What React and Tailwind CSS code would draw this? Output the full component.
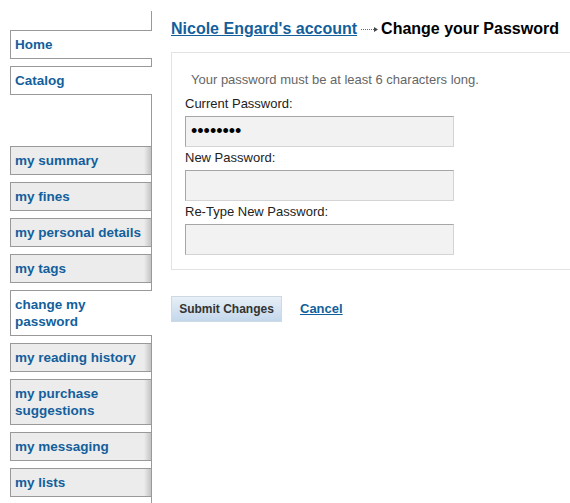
const tabs = [
  { label: 'my summary' },
  { label: 'my fines' },
  { label: 'my personal details' },
  { label: 'my tags' },
  { label: 'change my password', active: true },
  { label: 'my reading history' },
  { label: 'my purchase suggestions' },
  { label: 'my messaging' },
  { label: 'my lists' },
];

function Tab({ label, active, className = '' }) {
  const base = 'py-[5px] pl-[4px] pr-[6px] leading-[17px] text-[13.5px] font-bold text-[#135f9c] border border-[#999]';
  if (active) {
    return <li className={`${base} -mr-px border-r-0 bg-white ${className}`}><a href="#">{label}</a></li>;
  }
  return (
    <li className={`${base} border-r-0 bg-[linear-gradient(90deg,#ececec_95%,#c4c4c4)] ${className}`}>
      <a href="#">{label}</a>
    </li>
  );
}

function Arrow() {
  return (
    <svg width="18" height="7" viewBox="0 0 18 7" className="inline-block ml-[4px] mr-[2px] align-middle">
      <line x1="0" y1="3.5" x2="13" y2="3.5" stroke="#666" strokeWidth="1" strokeDasharray="1 1" />
      <polygon points="13,1 17,3.5 13,6" fill="#444" />
    </svg>
  );
}

function Field({ label, value, last }) {
  return (
    <div>
      <label className="block text-[13px] leading-4 text-[#222] mb-[4px]">{label}</label>
      <input
        type="password"
        value={value}
        readOnly
        className={`block w-[269px] h-[31px] bg-[#f2f2f2] border border-[#d4d4d4] border-t-[#a6a6a6] border-l-[#a6a6a6] pl-[5px] text-[18px] text-black outline-none ${last ? '' : 'mb-[3px]'}`}
      />
    </div>
  );
}

export default function App() {
  return (
    <div className="w-[570px] h-[503px] overflow-hidden flex bg-white" style={{ fontFamily: '"Liberation Sans", Arial, sans-serif' }}>
      <ul className="w-[152px] shrink-0 pl-[10px] mt-[11px] pt-[19px] border-r border-[#999] flex flex-col">
        <Tab label="Home" active />
        <Tab label="Catalog" active className="mt-[7px]" />
        {tabs.map((t, i) => (
          <Tab key={t.label} label={t.label} active={t.active} className={i === 0 ? 'mt-[51px]' : 'mt-[7px]'} />
        ))}
      </ul>

      <div className="flex-1 pl-[19px] pt-[19px]">
        <h1 className="text-[16px] leading-[20px] font-bold text-black whitespace-nowrap">
          <a href="#" className="text-[#135f9c] underline">Nicole Engard's account</a>
          <Arrow />
          Change your Password
        </h1>

        <div className="mt-[13px] w-[420px] border border-[#e3e3e3] pt-[19px] pl-[13px] pb-[14px]">
          <p className="text-[13px] leading-4 text-[#666] pl-[6px] mb-[8px]">Your password must be at least 6 characters long.</p>
          <Field label="Current Password:" value="password" />
          <Field label="New Password:" value="" />
          <Field label="Re-Type New Password:" value="" last />
        </div>

        <div className="mt-[26px] flex items-center">
          <button className="w-[111px] h-[26px] border border-[#cfd9e3] bg-[linear-gradient(#e8eff7,#c3d7ec)] text-[12px] font-bold text-[#333]">
            Submit Changes
          </button>
          <a href="#" className="ml-[18px] text-[13px] font-bold text-[#135f9c] underline">Cancel</a>
        </div>
      </div>
    </div>
  );
}
